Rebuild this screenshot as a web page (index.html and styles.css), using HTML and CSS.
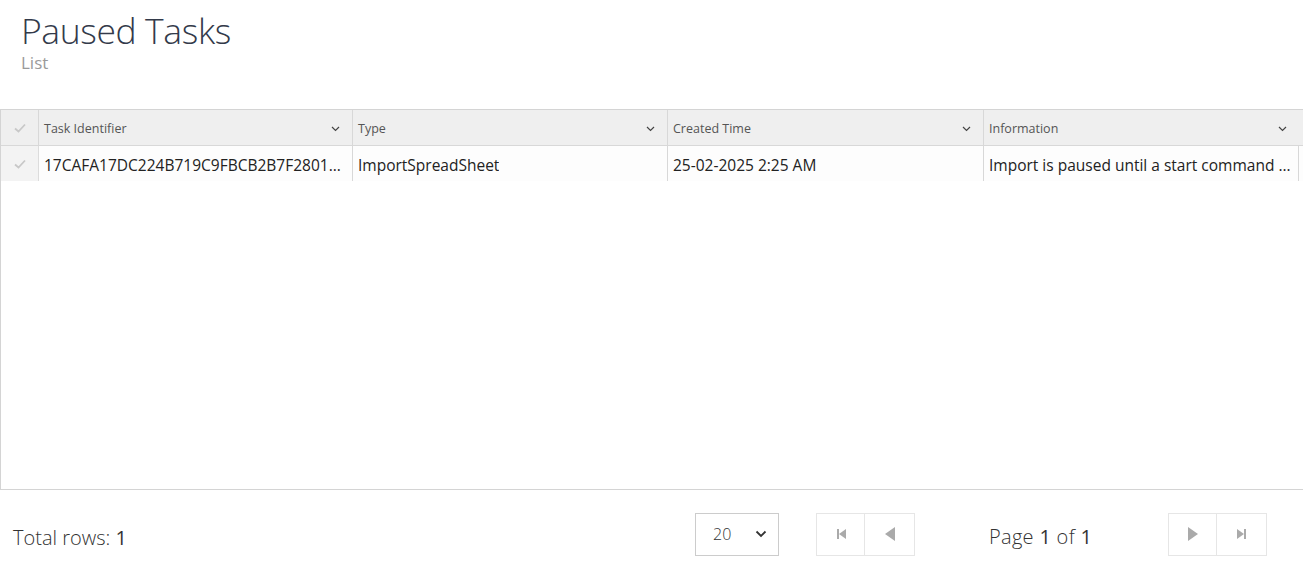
FILE: index.html
```html
<!DOCTYPE html>
<html>
<head>
<meta charset="utf-8">
<link rel="stylesheet" href="styles.css">
</head>
<body>
<header class="page-head">
  <h1 class="title">Paused Tasks</h1>
  <div class="subtitle">List</div>
</header>
<section class="grid">
  <div class="grid-header row">
    <div class="cell check"><svg width="12" height="10" viewBox="0 0 12 10"><path d="M1 5.5 L4.5 8.5 L11 1.5" fill="none" stroke="#c8c8c8" stroke-width="1.8"/></svg></div>
    <div class="cell col">Task Identifier<svg class="chev" width="9" height="6" viewBox="0 0 9 6"><path d="M1 1 L4.5 4.5 L8 1" fill="none" stroke="#444" stroke-width="1.2"/></svg></div>
    <div class="cell col">Type<svg class="chev" width="9" height="6" viewBox="0 0 9 6"><path d="M1 1 L4.5 4.5 L8 1" fill="none" stroke="#444" stroke-width="1.2"/></svg></div>
    <div class="cell col">Created Time<svg class="chev" width="9" height="6" viewBox="0 0 9 6"><path d="M1 1 L4.5 4.5 L8 1" fill="none" stroke="#444" stroke-width="1.2"/></svg></div>
    <div class="cell col">Information<svg class="chev" width="9" height="6" viewBox="0 0 9 6"><path d="M1 1 L4.5 4.5 L8 1" fill="none" stroke="#444" stroke-width="1.2"/></svg></div>
  </div>
  <div class="grid-row row">
    <div class="cell check"><svg width="12" height="10" viewBox="0 0 12 10"><path d="M1 5.5 L4.5 8.5 L11 1.5" fill="none" stroke="#c8c8c8" stroke-width="1.8"/></svg></div>
    <div class="cell col"><span class="txt">17CAFA17DC224B719C9FBCB2B7F28011A2</span></div>
    <div class="cell col"><span class="txt">ImportSpreadSheet</span></div>
    <div class="cell col"><span class="txt">25-02-2025 2:25 AM</span></div>
    <div class="cell col"><span class="txt">Import is paused until a start command is issued</span></div>
  </div>
</section>
<footer class="footer">
  <div class="total">Total rows: <b>1</b></div>
  <div class="size-select">20<svg width="12" height="8" viewBox="0 0 12 8"><path d="M1.5 1.5 L6 6 L10.5 1.5" fill="none" stroke="#333" stroke-width="1.8"/></svg></div>
  <div class="pager">
    <span class="pbtn"><svg width="12" height="12" viewBox="0 0 12 12"><rect x="2" y="1" width="2" height="10" fill="#aaa"/><path d="M11 1 L4 6 L11 11Z" fill="#aaa"/></svg></span>
    <span class="pbtn"><svg width="12" height="14" viewBox="0 0 12 14"><path d="M11 0 L1 7 L11 14Z" fill="#aaa"/></svg></span>
  </div>
  <div class="page-info">Page <b>1</b> of <b>1</b></div>
  <div class="pager">
    <span class="pbtn"><svg width="12" height="14" viewBox="0 0 12 14"><path d="M1 0 L11 7 L1 14Z" fill="#aaa"/></svg></span>
    <span class="pbtn"><svg width="12" height="12" viewBox="0 0 12 12"><path d="M1 1 L8 6 L1 11Z" fill="#aaa"/><rect x="8" y="1" width="2" height="10" fill="#aaa"/></svg></span>
  </div>
</footer>
</body>
</html>
```
FILE: styles.css
```css
html, body {
  margin: 0;
  padding: 0;
  background: #fff;
  font-family: "Open Sans", "Noto Sans", sans-serif;
  color: #333;
}
.page-head {
  padding: 10px 0 0 21px;
  height: 103px;
  box-sizing: border-box;
}
.title {
  margin: 0;
  font-weight: 300;
  font-size: 35.5px;
  line-height: 40px;
  color: #333a4a;
  letter-spacing: -0.4px;
}
.subtitle {
  font-size: 17px;
  line-height: 20px;
  color: #9a9a9a;
  font-weight: 400;
  margin-top: 3px;
}
.grid {
  height: 381px;
  box-sizing: border-box;
  border: 1px solid #d4d4d4;
  border-right: none;
  margin-top: 6px;
}
.row {
  display: grid;
  grid-template-columns: 38px 314px 315px 316px 315px 1fr;
}
.grid-header {
  background: #efefef;
  height: 36px;
  border-bottom: 1px solid #d8d8d8;
  box-sizing: border-box;
}
.grid-row {
  height: 35px;
  background: #fdfdfd;
}
.cell {
  display: flex;
  align-items: center;
  box-sizing: border-box;
  min-width: 0;
}
.check {
  justify-content: center;
  background: #efefef;
  border-right: 1px solid #d8d8d8;
}
.grid-row .check { background: #f3f3f3; border-right-color: #dcdcdc; }
.col {
  padding: 0 6px 0 5px;
  border-right: 1px solid #d8d8d8;
}
.grid-header .col {
  font-size: 12.5px;
  color: #555;
  justify-content: space-between;
  padding-right: 12px;
  padding-top: 2px;
}
.grid-header .col:last-child { border-right: none; }
.grid-row .col {
  font-size: 15.5px;
  color: #222;
  padding-top: 2px;
}
.txt {
  white-space: nowrap;
  overflow: hidden;
  text-overflow: ellipsis;
  display: block;
}
.footer {
  height: 86px;
  display: flex;
  align-items: center;
  padding-top: 2px;
  box-sizing: border-box;
}
.total {
  margin-left: 13px;
  width: 682px;
  font-size: 20px;
  font-weight: 300;
  color: #333;
  padding-top: 6px;
}
.total b, .page-info b { font-weight: 400; }
.size-select {
  width: 84px;
  height: 43px;
  box-sizing: border-box;
  border: 1px solid #ccc;
  display: flex;
  align-items: center;
  justify-content: space-between;
  padding: 0 11px 0 17px;
  font-size: 16px;
  font-weight: 300;
  color: #333;
}
.pager {
  display: flex;
  margin-left: 37px;
}
.pbtn {
  width: 49px;
  height: 43px;
  box-sizing: border-box;
  border: 1px solid #e6e6e6;
  display: flex;
  align-items: center;
  justify-content: center;
}
.pbtn + .pbtn { border-left: none; width: 50px; }
.page-info {
  margin-left: 74px;
  width: 179px;
  font-size: 20px;
  font-weight: 300;
  color: #333;
  padding-top: 4px;
  letter-spacing: 0.3px;
}
.page-info + .pager { margin-left: 0; }
```
